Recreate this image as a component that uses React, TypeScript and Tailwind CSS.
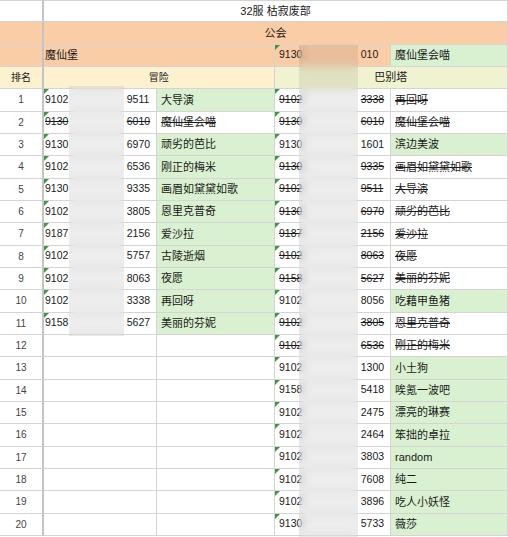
type Entry = { head: string; tail: string; name: string; struck: boolean }

const adventure: Entry[] = [
  { head: '9102', tail: '9511', name: '大导演', struck: false },
  { head: '9130', tail: '6010', name: '魔仙堡会喵', struck: true },
  { head: '9130', tail: '6970', name: '顽劣的芭比', struck: false },
  { head: '9102', tail: '6536', name: '刚正的梅米', struck: false },
  { head: '9130', tail: '9335', name: '画眉如黛黛如歌', struck: false },
  { head: '9102', tail: '3805', name: '恩里克普奇', struck: false },
  { head: '9187', tail: '2156', name: '爱沙拉', struck: false },
  { head: '9102', tail: '5757', name: '古陵逝烟', struck: false },
  { head: '9102', tail: '8063', name: '夜愿', struck: false },
  { head: '9102', tail: '3338', name: '再回呀', struck: false },
  { head: '9158', tail: '5627', name: '美丽的芬妮', struck: false },
]

const babel: Entry[] = [
  { head: '9102', tail: '3338', name: '再回呀', struck: true },
  { head: '9130', tail: '6010', name: '魔仙堡会喵', struck: true },
  { head: '9130', tail: '1601', name: '滨边美波', struck: false },
  { head: '9130', tail: '9335', name: '画眉如黛黛如歌', struck: true },
  { head: '9102', tail: '9511', name: '大导演', struck: true },
  { head: '9130', tail: '6970', name: '顽劣的芭比', struck: true },
  { head: '9187', tail: '2156', name: '爱沙拉', struck: true },
  { head: '9102', tail: '8063', name: '夜愿', struck: true },
  { head: '9158', tail: '5627', name: '美丽的芬妮', struck: true },
  { head: '9102', tail: '8056', name: '吃藉甲鱼猪', struck: false },
  { head: '9102', tail: '3805', name: '恩里克普奇', struck: true },
  { head: '9102', tail: '6536', name: '刚正的梅米', struck: true },
  { head: '9102', tail: '1300', name: '小土狗', struck: false },
  { head: '9158', tail: '5418', name: '唉氪一波吧', struck: false },
  { head: '9102', tail: '2475', name: '漂亮的琳赛', struck: false },
  { head: '9102', tail: '2464', name: '笨拙的卓拉', struck: false },
  { head: '9102', tail: '3803', name: 'random', struck: false },
  { head: '9102', tail: '7608', name: '纯二', struck: false },
  { head: '9102', tail: '3896', name: '吃人小妖怪', struck: false },
  { head: '9130', tail: '5733', name: '薇莎', struck: false },
]

const cell = 'border-b border-r border-[#d4d4d4] flex items-center overflow-hidden whitespace-nowrap'

function Flag() {
  return (
    <span className="absolute left-0 top-0 h-0 w-0 border-t-[5px] border-r-[5px] border-t-[#3b9b3b] border-r-transparent" />
  )
}

function IdCell({ entry, pad }: { entry?: Entry; pad: string }) {
  if (!entry) return <div className={cell} />
  const strike = entry.struck ? 'line-through' : ''
  return (
    <div className={`${cell} relative ${pad} text-[10.5px]`}>
      <Flag />
      <span className={strike}>{entry.head}</span>
      <span className="text-transparent">0000000000</span>
      <span className={strike}>{entry.tail}</span>
    </div>
  )
}

function NameCell({ entry }: { entry?: Entry }) {
  if (!entry) return <div className={cell} />
  return (
    <div
      className={`${cell} pl-1 text-[11px] ${
        entry.struck ? 'bg-white line-through' : 'bg-[#d9f1d0]'
      }`}
    >
      {entry.name}
    </div>
  )
}

export default function App() {
  const ranks = Array.from({ length: 20 }, (_, i) => i + 1)

  return (
    <div className="min-h-screen bg-white">
      <div className="relative grid w-[508px] grid-cols-[44px_113px_117.5px_116.5px_117px] auto-rows-[22.33px] font-['Liberation_Sans','Noto_Sans_CJK_SC',sans-serif] text-[#1a1a1a]">
        {/* Title */}
        <div className="border-b border-r-2 border-t border-[#d4d4d4] border-r-[#c4c4c4]" />
        <div className={`${cell} col-span-4 justify-center border-t text-[11px]`}>32服 枯寂废部</div>

        {/* Guild */}
        <div className="border-b border-r-2 border-[#d4d4d4] border-r-[#c4c4c4] bg-[#fbcda6]" />
        <div className={`${cell} col-span-4 justify-center bg-[#fbcda6] text-[11px]`}>公会</div>

        <div className="border-b border-r-2 border-[#d4d4d4] border-r-[#c4c4c4] bg-[#fbcda6]" />
        <div className={`${cell} col-span-2 bg-[#fbcda6] pl-[1px] text-[11px]`}>魔仙堡</div>
        <div className={`${cell} relative bg-[#fbcda6] pl-[4.5px] text-[10.5px]`}>
          <Flag />
          <span>9130</span>
          <span className="text-transparent">0000000000</span>
          <span>010</span>
        </div>
        <div className={`${cell} bg-[#d9f1d0] pl-1 text-[11px]`}>魔仙堡会喵</div>

        {/* Column headers */}
        <div className="flex items-center justify-center border-b border-r-2 border-[#d4d4d4] border-r-[#c4c4c4] bg-[#fdf1cf] text-[10px]">
          排名
        </div>
        <div className={`${cell} col-span-2 justify-center bg-[#fdf1cf] text-[10px]`}>冒险</div>
        <div className={`${cell} col-span-2 justify-center bg-[#f0f3cf] text-[11px]`}>巴别塔</div>

        {/* Rows */}
        {ranks.map((rank, i) => (
          <div key={rank} className="contents">
            <div className="flex items-center justify-center border-b border-r-2 border-[#d4d4d4] border-r-[#c4c4c4] text-[10px] text-[#444]">
              {rank}
            </div>
            <IdCell entry={adventure[i]} pad="pl-[1px]" />
            <NameCell entry={adventure[i]} />
            <IdCell entry={babel[i]} pad="pl-[4.5px]" />
            <NameCell entry={babel[i]} />
          </div>
        ))}

        {/* Masked id digits */}
        <div className="absolute left-[69px] top-[86px] h-[250px] w-[55px] bg-black/[0.07] backdrop-blur-[4px]" />
        <div className="absolute left-[299px] top-[45px] h-[492px] w-[59px] bg-black/[0.07] backdrop-blur-[4px]" />
      </div>
    </div>
  )
}
